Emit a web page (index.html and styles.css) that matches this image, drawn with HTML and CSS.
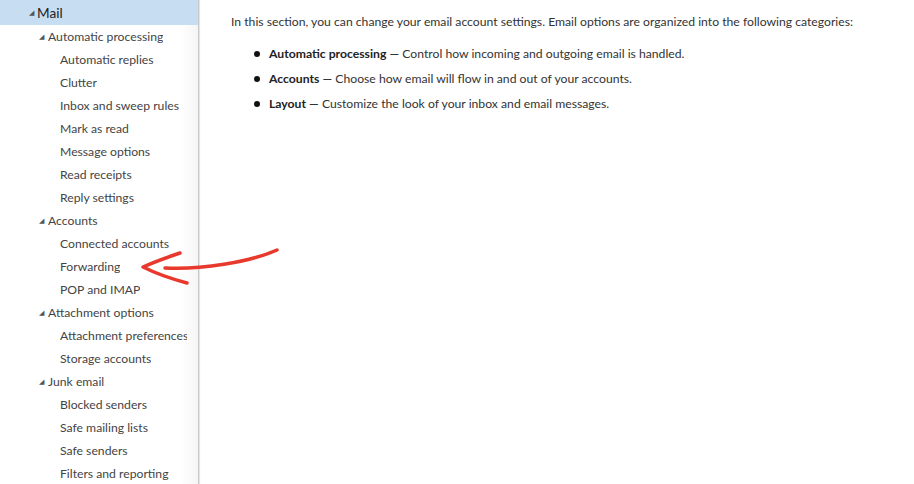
FILE: index.html
```html
<!DOCTYPE html>
<html>
<head>
<meta charset="utf-8">
<link rel="stylesheet" href="styles.css">
</head>
<body>
<div class="page">
  <nav class="sidebar">
    <div class="row l1 selected"><span class="tri">&#9698;</span><span class="label">Mail</span></div>
    <div class="row l2"><span class="tri">&#9698;</span><span class="label">Automatic processing</span></div>
    <div class="row l3"><span class="label">Automatic replies</span></div>
    <div class="row l3"><span class="label">Clutter</span></div>
    <div class="row l3"><span class="label">Inbox and sweep rules</span></div>
    <div class="row l3"><span class="label">Mark as read</span></div>
    <div class="row l3"><span class="label">Message options</span></div>
    <div class="row l3"><span class="label">Read receipts</span></div>
    <div class="row l3"><span class="label">Reply settings</span></div>
    <div class="row l2"><span class="tri">&#9698;</span><span class="label">Accounts</span></div>
    <div class="row l3"><span class="label">Connected accounts</span></div>
    <div class="row l3"><span class="label">Forwarding</span></div>
    <div class="row l3"><span class="label">POP and IMAP</span></div>
    <div class="row l2"><span class="tri">&#9698;</span><span class="label">Attachment options</span></div>
    <div class="row l3"><span class="label">Attachment preferences</span></div>
    <div class="row l3"><span class="label">Storage accounts</span></div>
    <div class="row l2"><span class="tri">&#9698;</span><span class="label">Junk email</span></div>
    <div class="row l3"><span class="label">Blocked senders</span></div>
    <div class="row l3"><span class="label">Safe mailing lists</span></div>
    <div class="row l3"><span class="label">Safe senders</span></div>
    <div class="row l3"><span class="label">Filters and reporting</span></div>
  </nav>
  <main class="content">
    <p class="intro">In this section, you can change your email account settings. Email options are organized into the following categories:</p>
    <ul class="cats">
      <li><b>Automatic processing</b> — Control how incoming and outgoing email is handled.</li>
      <li><b>Accounts</b> — Choose how email will flow in and out of your accounts.</li>
      <li><b>Layout</b> — Customize the look of your inbox and email messages.</li>
    </ul>
  </main>
  <svg class="arrow" width="914" height="484" viewBox="0 0 914 484">
    <path d="M277 250 C 250 262, 200 270, 165 268" fill="none" stroke="#e8392c" stroke-width="3.5" stroke-linecap="round"/>
    <path d="M180 253 C 165 258, 152 263, 143 267 C 155 273, 172 279, 187 283" fill="none" stroke="#e8392c" stroke-width="3.5" stroke-linecap="round" stroke-linejoin="round"/>
  </svg>
</div>
</body>
</html>
```

FILE: styles.css
```css
html, body {
  margin: 0;
  padding: 0;
  background: #fff;
}
.page {
  display: flex;
  width: 914px;
  height: 484px;
  overflow: hidden;
  position: relative;
  font-family: "Lato", "Open Sans", sans-serif;
  color: #333;
}
.sidebar {
  width: 198px;
  flex: none;
  background: linear-gradient(to right, #fff 0, #fff 180px, #f6f6f6 197px);
  border-right: 1px solid #c8c8c8;
  box-shadow: 1px 0 1px #e6e6e6;
  overflow: hidden;
}
.row {
  display: flex;
  align-items: center;
  height: 23px;
  font-size: 12.2px;
  color: #444;
  white-space: nowrap;
  padding-right: 11px;
}
.row .label {
  overflow: hidden;
}
.tri {
  font-size: 7px;
  width: 8px;
  color: #555;
  display: inline-block;
}
.l1 {
  height: 25px;
  padding-left: 29px;
  font-size: 13.6px;
  color: #222;
}
.selected {
  background: #c7ddf2;
}
.l2 { padding-left: 39px; }
.l2 .tri { width: 9px; }
.l3 { padding-left: 60px; }
.content {
  flex: 1;
  padding-left: 32px;
  padding-top: 13px;
  font-size: 12.2px;
  color: #333;
}
.intro {
  margin: 0;
  line-height: 18px;
  white-space: nowrap;
}
.cats {
  margin: 10px 0 0 0;
  padding-left: 38px;
  list-style: none;
}
.cats li {
  position: relative;
  line-height: 25px;
  white-space: nowrap;
}
.cats li::before {
  content: "";
  position: absolute;
  left: -15px;
  top: 10px;
  width: 6px;
  height: 6px;
  border-radius: 50%;
  background: #111;
}
.cats b {
  font-weight: 700;
  color: #222;
}
.arrow {
  position: absolute;
  left: 0;
  top: 0;
  pointer-events: none;
}
```
